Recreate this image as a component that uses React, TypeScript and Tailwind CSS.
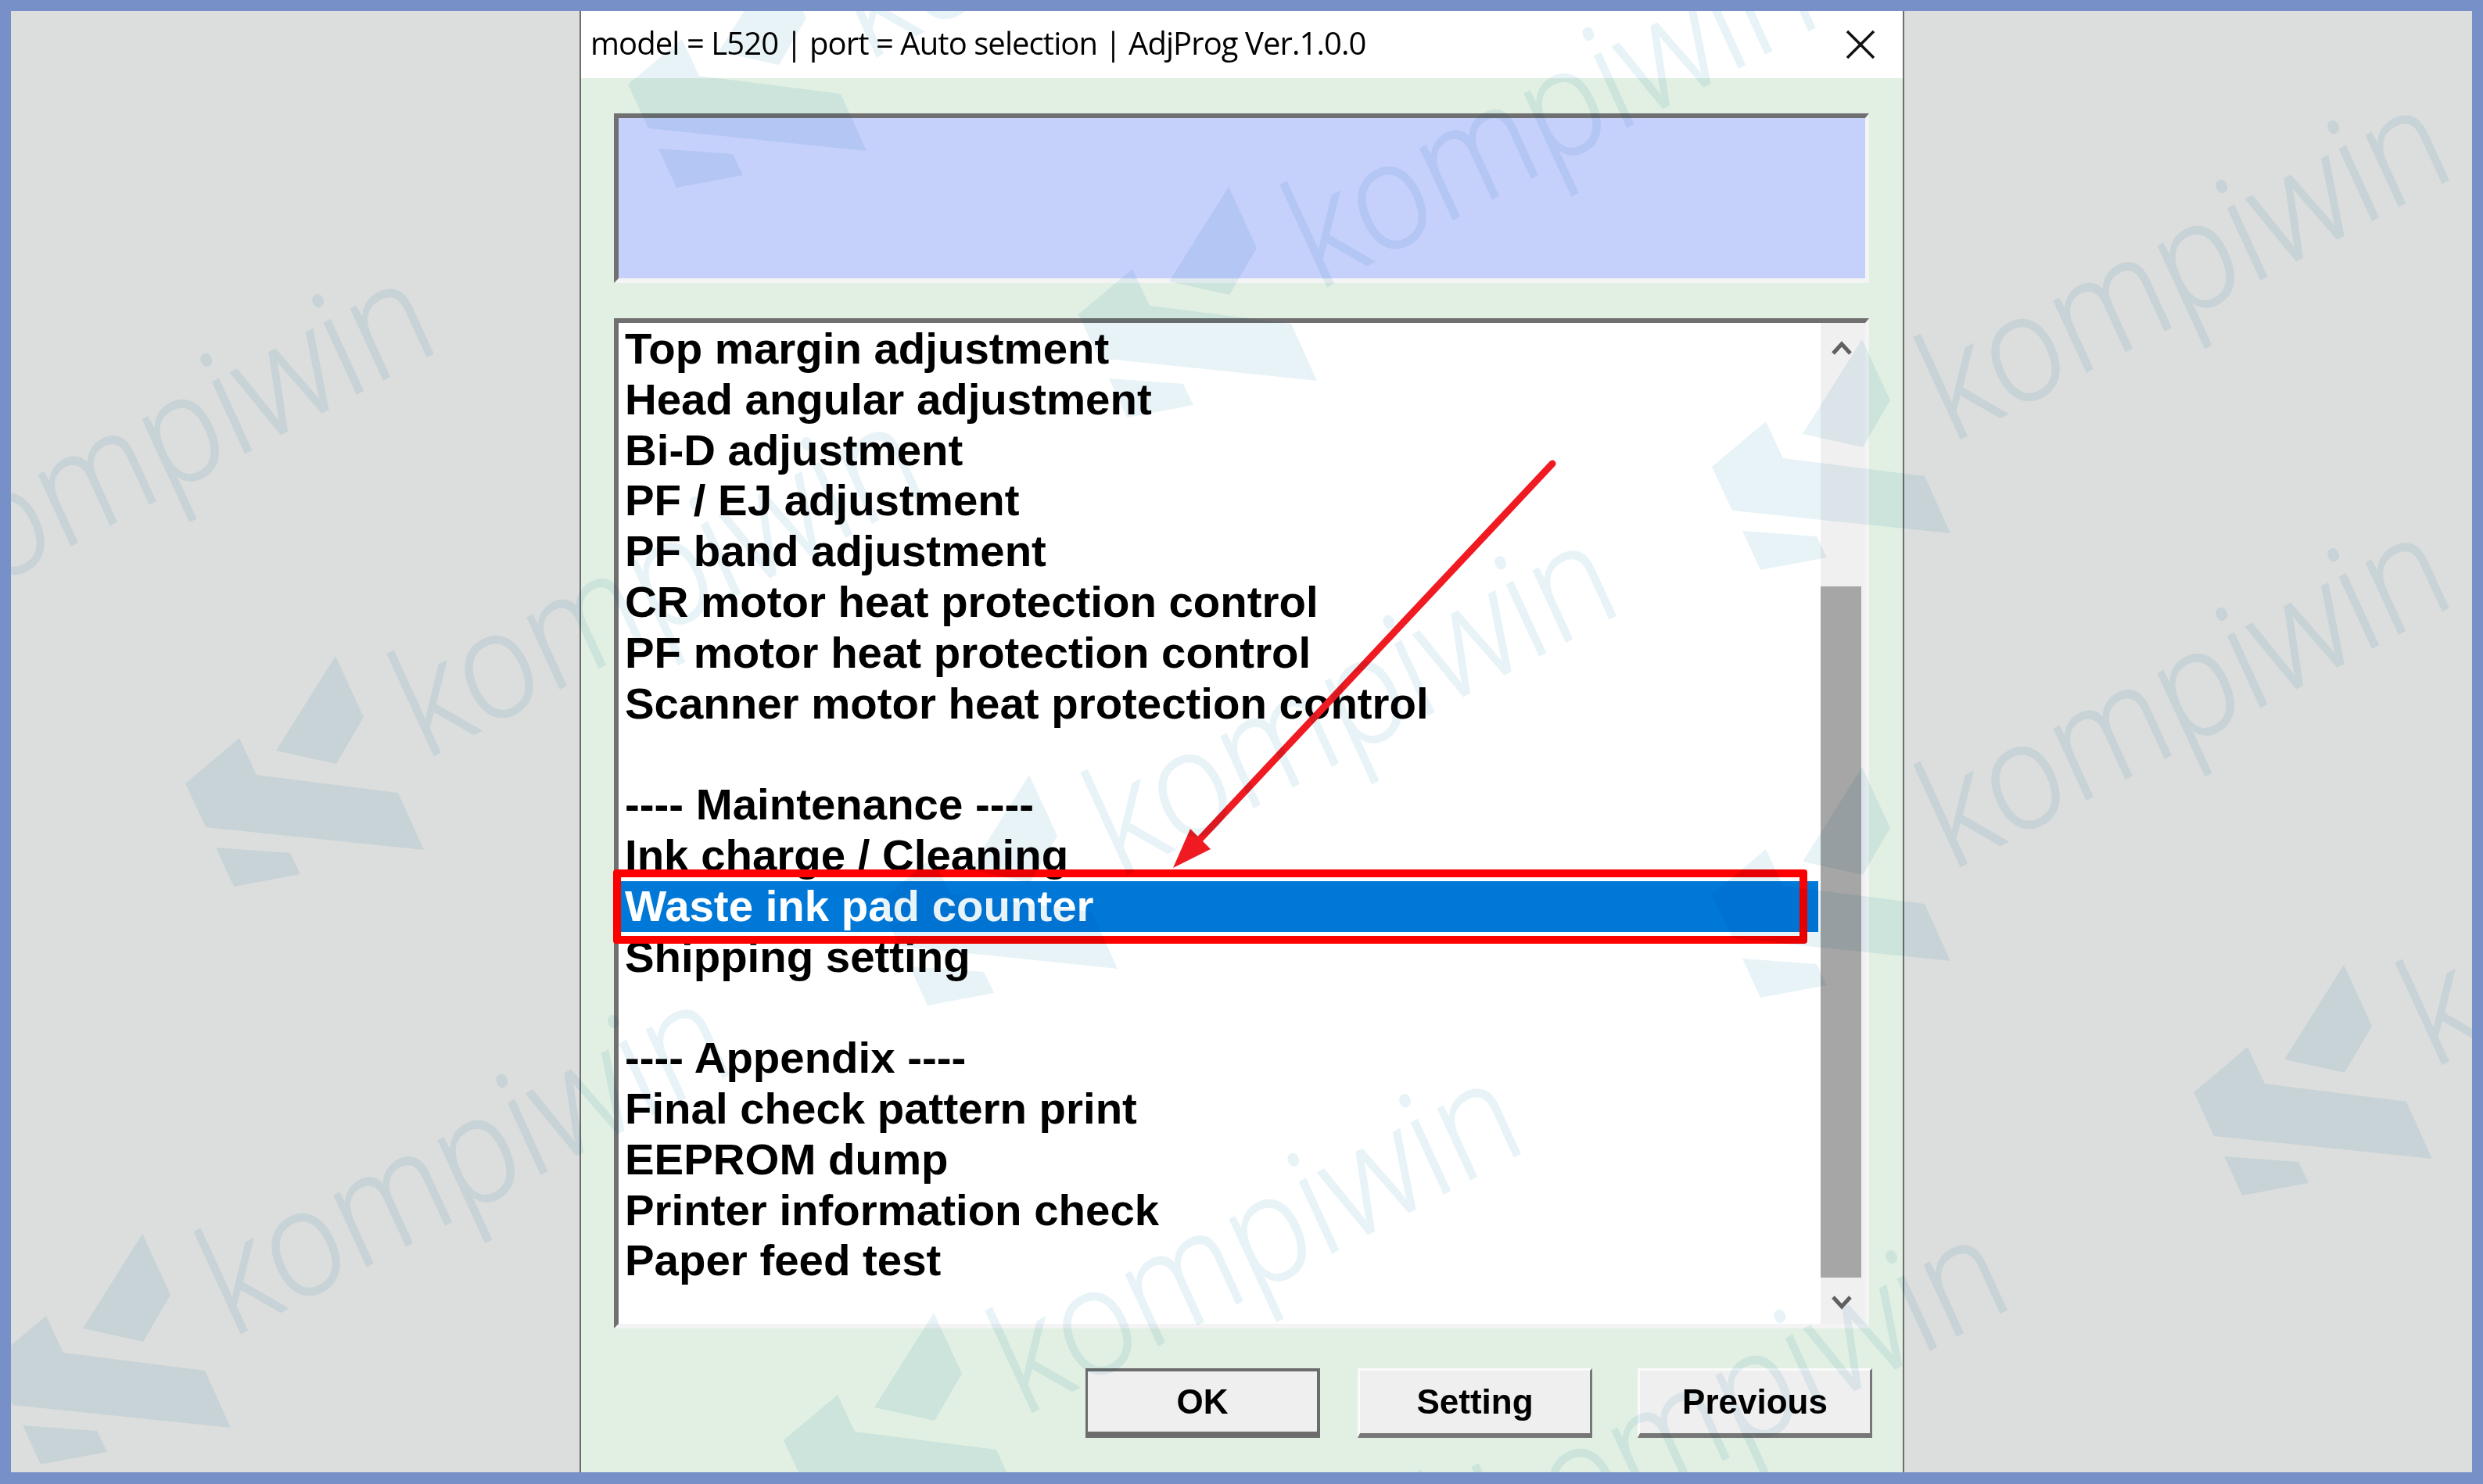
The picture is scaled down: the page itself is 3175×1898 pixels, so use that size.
import React from "react";

const rows = [
  "Top margin adjustment",
  "Head angular adjustment",
  "Bi-D adjustment",
  "PF / EJ adjustment",
  "PF band adjustment",
  "CR motor heat protection control",
  "PF motor heat protection control",
  "Scanner motor heat protection control",
  "",
  "---- Maintenance ----",
  "Ink charge / Cleaning",
  "Waste ink pad counter",
  "Shipping setting",
  "",
  "---- Appendix ----",
  "Final check pattern print",
  "EEPROM dump",
  "Printer information check",
  "Paper feed test",
];

// watermark repeats, offsets measured from the one at the left middle
const marks = [
  [0, 0],
  [-625, -183],
  [566, -894],
  [1142, -600],
  [1952, -405],
  [887, 152],
  [1952, 142],
  [-247, 739],
  [765, 840],
  [2568, 395],
  [1387, 1040],
];

const Watermark = ({ dx, dy }: { dx: number; dy: number }) => (
  <g transform={`translate(${dx} ${dy})`}>
    <polygon points="306,944 237,1002 263,1058 542,1087 509,1014 328,991" />
    <polygon points="429,839 353,960 430,977 465,917" />
    <polygon points="276,1084 299,1134 384,1118 371,1091" />
    <text
      transform="matrix(0.885 -0.47 0.46 1 542 973)"
      fontFamily="'Open Sans', sans-serif"
      fontWeight="300"
      fontSize="170"
      stroke="#e8f3f8"
      strokeWidth="2"
    >
      kompiwin
    </text>
  </g>
);

const DlgButton = ({ label, active, className }: { label: string; active?: boolean; className: string }) => (
  <button
    className={`h-[89px] w-[300px] shrink-0 bg-[#efefef] border-solid font-bold text-[44px] text-black flex items-center justify-center ${
      active
        ? "border-t-[4px] border-l-[3px] border-r-[4px] border-b-[8px] border-t-[#6c6c6c] border-l-[#6c6c6c] border-r-[#6c6c6c] border-b-[#6c6c6c]"
        : "border-t-[3px] border-l-[3px] border-r-[3px] border-b-[6px] border-t-[#fafafa] border-l-[#fafafa] border-r-[#777777] border-b-[#777777]"
    } ${className}`}
  >
    {label}
  </button>
);

const App = () => {
  return (
    <div className="w-[3175px] h-[1898px] bg-[#7890c8] pt-[14px] pl-[14px] pr-[14px] pb-[15px] font-['Liberation_Sans',sans-serif]">
      <div className="relative w-full h-full overflow-hidden bg-[#dcdedd]">
        {/* dialog */}
        <div className="ml-[727px] w-[1694px] h-full border-x-[2px] border-[#6e6e6e] flex flex-col">
          <div className="h-[86px] shrink-0 bg-white flex items-center justify-between pl-[12px] pr-[35px]">
            <span className="font-['Open_Sans',sans-serif] text-[40px] text-black tracking-[-0.93px] mb-[4px]">
              model = L520 | port = Auto selection | AdjProg Ver.1.0.0
            </span>
            <svg width="38" height="38" viewBox="0 0 38 38" stroke="#111" strokeWidth="3.5" fill="none">
              <path d="M2 2 L36 36 M36 2 L2 36" />
            </svg>
          </div>

          <div className="flex-1 bg-[#e1f0e3] pt-[45px] pl-[42px] pr-[43px]">
            <div className="h-[217px] w-[1605px] bg-[#c5d0fb] border-solid border-t-[6px] border-l-[6px] border-r-[5px] border-b-[6px] border-t-[#707070] border-l-[#707070] border-r-[#f4f4f4] border-b-[#f4f4f4]" />

            <div className="mt-[45px] h-[1292px] w-[1605px] bg-white border-solid border-t-[6px] border-l-[6px] border-r-[5px] border-b-[6px] border-t-[#707070] border-l-[#707070] border-r-[#f4f4f4] border-b-[#f4f4f4] flex">
              <div className="w-[1534px] pt-[1px] shrink-0">
                {rows.map((row, i) =>
                  row === "Waste ink pad counter" ? (
                    <div key={i} className="relative h-[64.8px] bg-[#0078d7] pl-[8px] text-white text-[56.4px] font-bold leading-[64.8px]">
                      {row}
                      <div className="absolute left-[-7px] top-[-15px] w-[1527px] h-[95px] rounded-[4px] border-solid border-[10px] border-[#ff0000]" />
                    </div>
                  ) : (
                    <div key={i} className="h-[64.8px] pl-[8px] text-black text-[56.4px] font-bold leading-[64.8px] whitespace-nowrap">
                      {row}
                    </div>
                  )
                )}
              </div>
              <div className="ml-[3px] flex-1 bg-[#f0f0f0] flex flex-col">
                <div className="h-[337px] shrink-0 pt-[22px] pr-[4px] flex justify-center items-start">
                  <svg width="26" height="20" viewBox="0 0 26 20" fill="none" stroke="#606060" strokeWidth="5">
                    <path d="M2 17 L13 5 L24 17" />
                  </svg>
                </div>
                <div className="h-[884px] w-[52px] shrink-0 bg-[#a6a6a6]" />
                <div className="flex-1 pt-[22px] pr-[4px] flex justify-center items-start">
                  <svg width="26" height="20" viewBox="0 0 26 20" fill="none" stroke="#606060" strokeWidth="5">
                    <path d="M2 3 L13 15 L24 3" />
                  </svg>
                </div>
              </div>
            </div>

            <div className="mt-[51px] flex">
              <DlgButton label="OK" active className="ml-[603px]" />
              <DlgButton label="Setting" className="ml-[48px]" />
              <DlgButton label="Previous" className="ml-[58px]" />
            </div>
          </div>
        </div>

        {/* red arrow pointing at the selected row */}
        <svg className="absolute inset-0 pointer-events-none" width="3147" height="1869" viewBox="14 14 3147 1869">
          <line x1="1985" y1="593" x2="1530" y2="1078" stroke="#f01a22" strokeWidth="9" strokeLinecap="round" />
          <polygon points="1500,1110 1522,1060 1548,1086" fill="#f01a22" />
        </svg>

        <svg
          className="absolute inset-0 pointer-events-none mix-blend-multiply"
          width="3147"
          height="1869"
          viewBox="14 14 3147 1869"
          fill="#e8f3f8"
        >
          {marks.map(([dx, dy], i) => (
            <Watermark key={i} dx={dx} dy={dy} />
          ))}
        </svg>
      </div>
    </div>
  );
};

export default App;
